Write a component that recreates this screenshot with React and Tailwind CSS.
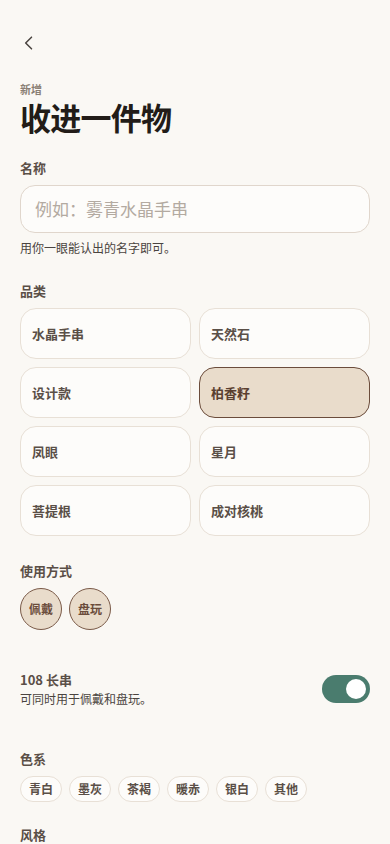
import React, { useState } from "react";

const font = { fontFamily: '"Noto Sans CJK SC", "Noto Sans", sans-serif' };

const categories = ["水晶手串", "天然石", "设计款", "柏香籽", "凤眼", "星月", "菩提根", "成对核桃"];
const colors = ["青白", "墨灰", "茶褐", "暖赤", "银白", "其他"];

function Label({ children, className = "" }) {
  return <p className={`text-[13px] font-bold text-[#5a4f47] leading-none ${className}`}>{children}</p>;
}

export default function App() {
  const [cat, setCat] = useState("柏香籽");
  const [long, setLong] = useState(true);

  return (
    <div className="min-h-[844px] w-full bg-[#faf8f4] px-5 text-[#2a2420]" style={font}>
      {/* back */}
      <div className="pt-[33px] h-[60px]">
        <svg width="20" height="20" viewBox="0 0 24 24" fill="none" stroke="#4a4440" strokeWidth="1.8" strokeLinecap="round" strokeLinejoin="round" className="-ml-[1px]">
          <path d="M15 5l-7 7 7 7" />
        </svg>
      </div>

      <p className="mt-[22px] text-[11px] font-bold text-[#8a7f74] leading-[14px]">新增</p>
      <h1 className="mt-[1px] text-[31px] font-bold leading-[40px] tracking-tight text-[#221c18]">收进一件物</h1>

      <Label className="mt-[24px]">名称</Label>
      <div className="mt-[11px] h-[48px] rounded-[15px] border border-[#e0d6cc] bg-[#fdfcfa] flex items-center px-[14px]">
        <span className="text-[17px] text-[#b3aaa1]">例如：雾青水晶手串</span>
      </div>
      <p className="mt-[9px] text-[12px] text-[#4a4440] leading-none">用你一眼能认出的名字即可。</p>

      <Label className="mt-[30px]">品类</Label>
      <div className="mt-[11px] grid grid-cols-2 gap-2">
        {categories.map((c) => {
          const on = c === cat;
          return (
            <button
              key={c}
              onClick={() => setCat(c)}
              className={`h-[51px] rounded-[16px] border text-left px-[11px] text-[13px] font-bold ${
                on ? "bg-[#e9dccb] border-[#6b4c3b] text-[#5a3f30]" : "bg-[#fdfcfa] border-[#e8e0d6] text-[#5a4f47]"
              }`}
            >
              {c}
            </button>
          );
        })}
      </div>

      <Label className="mt-[28px]">使用方式</Label>
      <div className="mt-[11px] flex gap-[7px]">
        {["佩戴", "盘玩"].map((u) => (
          <div key={u} className="w-[42px] h-[42px] rounded-full border border-[#7a5a48] bg-[#e9dccb] flex items-center justify-center text-[12px] font-bold text-[#6b4c3b]">
            {u}
          </div>
        ))}
      </div>

      <div className="mt-[43px] flex items-center justify-between">
        <div>
          <p className="text-[13px] font-bold text-[#5a4f47] leading-none">108 长串</p>
          <p className="mt-[7px] text-[12px] text-[#4a4440] leading-none">可同时用于佩戴和盘玩。</p>
        </div>
        <button
          onClick={() => setLong(!long)}
          className={`w-[48px] h-[28px] rounded-full flex items-center px-[4px] ${long ? "bg-[#4a7c6e] justify-end" : "bg-[#d9d0c6] justify-start"}`}
        >
          <span className="w-[20px] h-[20px] rounded-full bg-white" />
        </button>
      </div>

      <Label className="mt-[47px]">色系</Label>
      <div className="mt-[11px] flex gap-[7px]">
        {colors.map((c) => (
          <div key={c} className="h-[26px] w-[42px] rounded-full border border-[#e8e0d6] bg-[#fdfcfa] flex items-center justify-center text-[12px] font-bold text-[#5a4f47]">
            {c}
          </div>
        ))}
      </div>

      <Label className="mt-[26px]">风格</Label>
    </div>
  );
}
